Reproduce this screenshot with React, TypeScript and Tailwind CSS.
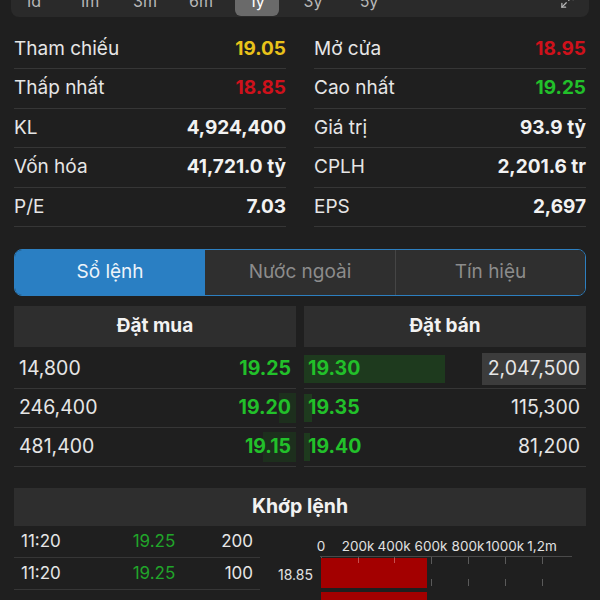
import { Maximize2 } from 'lucide-react';

const periods = ['1d', '1m', '3m', '6m', '1y', '3y', '5y'];

const statsLeft = [
  { label: 'Tham chiếu', value: '19.05', color: 'text-[#e9c21a]' },
  { label: 'Thấp nhất', value: '18.85', color: 'text-[#cf111b]' },
  { label: 'KL', value: '4,924,400', color: 'text-[#f2f2f2]' },
  { label: 'Vốn hóa', value: '41,721.0 tỷ', color: 'text-[#f2f2f2]' },
  { label: 'P/E', value: '7.03', color: 'text-[#f2f2f2]' },
];

const statsRight = [
  { label: 'Mở cửa', value: '18.95', color: 'text-[#cf111b]' },
  { label: 'Cao nhất', value: '19.25', color: 'text-[#22c02a]' },
  { label: 'Giá trị', value: '93.9 tỷ', color: 'text-[#f2f2f2]' },
  { label: 'CPLH', value: '2,201.6 tr', color: 'text-[#f2f2f2]' },
  { label: 'EPS', value: '2,697', color: 'text-[#f2f2f2]' },
];

const buys = [
  { vol: '14,800', price: '19.25', bar: 0 },
  { vol: '246,400', price: '19.20', bar: 17 },
  { vol: '481,400', price: '19.15', bar: 33 },
];

const sells = [
  { price: '19.30', vol: '2,047,500', bar: 141, hl: true },
  { price: '19.35', vol: '115,300', bar: 8, hl: false },
  { price: '19.40', vol: '81,200', bar: 6, hl: false },
];

const trades = [
  { time: '11:20', price: '19.25', vol: '200' },
  { time: '11:20', price: '19.25', vol: '100' },
];

const StatColumn = ({ rows }: { rows: typeof statsLeft }) => (
  <div className="flex w-[272px] flex-col">
    {rows.map((r) => (
      <div
        key={r.label}
        className="flex h-[39.4px] items-center justify-between border-b border-[#363636] text-[19px]"
      >
        <span className="text-[#e6e6e6]">{r.label}</span>
        <span className={`font-bold ${r.color}`}>{r.value}</span>
      </div>
    ))}
  </div>
);

const ticks = [61, 98, 134, 171, 208, 245, 282];
const tickLabels = ['0', '200k', '400k', '600k', '800k', '1000k', '1,2m'];

const VolumeChart = () => (
  <svg width="340" height="74" viewBox="0 0 340 74" className="block">
    {tickLabels.map((t, i) => (
      <text
        key={t}
        x={ticks[i]}
        y={25}
        textAnchor="middle"
        fontSize="13.5"
        fill="#e2e2e2"
        fontFamily="Inter, sans-serif"
      >
        {t}
      </text>
    ))}
    <line x1={60} y1={30.5} x2={312} y2={30.5} stroke="#4a4a4a" strokeWidth="1" />
    {ticks.map((x) => (
      <line
        key={x}
        x1={x + 0.5}
        y1={31}
        x2={x + 0.5}
        y2={74}
        stroke="#5a5a5a"
        strokeWidth="1"
        strokeDasharray="7 15"
      />
    ))}
    <rect x={61} y={32} width={106} height={30} fill="#a30000" />
    <rect x={61} y={66} width={106} height={12} fill="#a30000" />
    {[98, 134].map((x) => (
      <line key={x} x1={x + 0.5} y1={32} x2={x + 0.5} y2={37} stroke="#c65050" strokeWidth="1" />
    ))}
    <text x={53} y={54} textAnchor="end" fontSize="14" fill="#e2e2e2" fontFamily="Inter, sans-serif">
      18.85
    </text>
  </svg>
);

export default function App() {
  return (
    <div className="h-[600px] w-[600px] overflow-hidden bg-[#1f1f1f] font-['Inter',sans-serif] text-[#e6e6e6]">
      {/* period selector, cut at the top */}
      <div className="mx-[11px] flex h-[17px] items-end overflow-hidden rounded-b-[8px] bg-[#2a2a2a]">
        <div className="flex h-[31px] w-full gap-[12px]">
          {periods.map((p) => (
            <div
              key={p}
              className={`flex h-[30px] w-[44px] items-center justify-center rounded-[6px] text-[16px] ${
                p === '1y' ? 'bg-[#6a6a6a] text-white' : 'text-[#b8b8b8]'
              }`}
            >
              {p}
            </div>
          ))}
          <div className="ml-auto mr-[14px] flex h-[30px] items-center text-[#b8b8b8]">
            <Maximize2 size={15} strokeWidth={2} />
          </div>
        </div>
      </div>

      {/* stats */}
      <div className="mt-[13px] flex gap-[28px] px-[14px]">
        <StatColumn rows={statsLeft} />
        <StatColumn rows={statsRight} />
      </div>

      {/* tabs */}
      <div className="mx-[14px] mt-[22px] flex h-[47px] overflow-hidden rounded-[8px] border border-[#2d7fc0] text-[19px]">
        <div className="flex w-[190px] items-center justify-center bg-[#2a7fc3] text-[#eef4fa]">Sổ lệnh</div>
        <div className="flex w-[191px] items-center justify-center border-r border-[#454545] bg-[#2f2f2f] text-[#8c8c8c]">
          Nước ngoài
        </div>
        <div className="flex flex-1 items-center justify-center bg-[#2f2f2f] text-[#8c8c8c]">Tín hiệu</div>
      </div>

      {/* order book */}
      <div className="mt-[10px] flex gap-[8px] px-[14px]">
        <div className="w-[282px]">
          <div className="flex h-[41px] items-center justify-center bg-[#2e2e2e] text-[19px] font-bold text-[#f2f2f2]">
            Đặt mua
          </div>
          <div className="mt-[3px]">
            {buys.map((b) => (
              <div key={b.price} className="relative flex h-[39px] items-center justify-between border-b border-[#363636] px-[5px] text-[19.5px]">
                {b.bar > 0 && (
                  <div className="absolute bottom-[4px] right-0 top-[4px] bg-[#1d2f1d]" style={{ width: b.bar }} />
                )}
                <span className="relative text-[#e6e6e6]">{b.vol}</span>
                <span className="relative font-bold text-[#22c02a]">{b.price}</span>
              </div>
            ))}
          </div>
        </div>
        <div className="w-[282px]">
          <div className="flex h-[41px] items-center justify-center bg-[#2e2e2e] text-[19px] font-bold text-[#f2f2f2]">
            Đặt bán
          </div>
          <div className="mt-[3px]">
            {sells.map((s) => (
              <div key={s.price} className="relative flex h-[39px] items-center justify-between border-b border-[#363636] pl-[4px] text-[19.5px]">
                <div className="absolute bottom-[5px] left-0 top-[5px] bg-[#1e3a1e]" style={{ width: s.bar }} />
                <span className="relative font-bold text-[#22c02a]">{s.price}</span>
                <span
                  className={`relative flex h-[32px] items-center px-[6px] text-[#e6e6e6] ${s.hl ? 'bg-[#3c3c3c]' : ''}`}
                >
                  {s.vol}
                </span>
              </div>
            ))}
          </div>
        </div>
      </div>

      {/* matched trades */}
      <div className="mx-[14px] mt-[21px] flex h-[38px] items-center justify-center bg-[#2e2e2e] text-[19.5px] font-bold text-[#f2f2f2]">
        Khớp lệnh
      </div>
      <div className="flex">
        <div className="ml-[14px] w-[246px]">
          {trades.map((t, i) => (
            <div key={i} className="flex h-[32px] items-center border-b border-[#363636] px-[7px] text-[17px]">
              <span className="w-[93px] text-[#e6e6e6]">{t.time}</span>
              <span className="w-[80px] text-center text-[#21a52a]">{t.price}</span>
              <span className="flex-1 text-right text-[#e6e6e6]">{t.vol}</span>
            </div>
          ))}
        </div>
        <VolumeChart />
      </div>
    </div>
  );
}
